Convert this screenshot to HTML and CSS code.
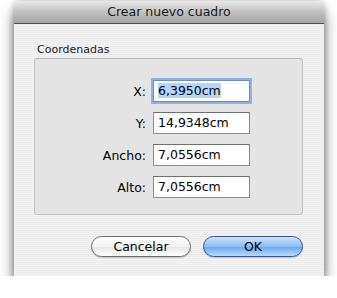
FILE: index.html
```html
<!DOCTYPE html>
<html lang="es">

<head>
    <meta charset="UTF-8">
    <title>Crear nuevo cuadro</title>
    <link rel="stylesheet" href="styles.css">
</head>

<body>
    <div class="window">
        <div class="titlebar">Crear nuevo cuadro</div>

        <div class="content">
            <div class="group-label">Coordenadas</div>
            <div class="group">
                <div class="form">
                    <label class="label">X:</label>
                    <div class="field focused"><span class="selected">6,3950cm</span></div>

                    <label class="label">Y:</label>
                    <div class="field">14,9348cm</div>

                    <label class="label">Ancho:</label>
                    <div class="field">7,0556cm</div>

                    <label class="label">Alto:</label>
                    <div class="field">7,0556cm</div>
                </div>
            </div>

            <div class="buttons">
                <button class="btn">Cancelar</button>
                <button class="btn btn-default">OK</button>
            </div>
        </div>
    </div>
</body>

</html>
```

FILE: styles.css
```css
* {
    box-sizing: border-box;
    margin: 0;
    padding: 0;
}

body {
    background-color: #ffffff;
    font-family: 'DejaVu Sans', 'Liberation Sans', sans-serif;
    color: #000;
    padding: 1px 0 0 14px;
}

.window {
    width: 310px;
    height: 275px;
    display: flex;
    flex-direction: column;
    border-radius: 6px 6px 0 0;
    overflow: hidden;
    box-shadow: 0 10px 14px rgba(0, 0, 0, 0.55), 0 0 6px rgba(0, 0, 0, 0.25);
}

.titlebar {
    height: 23px;
    background: linear-gradient(#e9e9e9, #bdbdbd 55%, #a6a6a6);
    border-bottom: 1px solid #4f4f4f;
    text-align: center;
    font-size: 12.5px;
    line-height: 22px;
    color: #1a1a1a;
}

.content {
    flex: 1;
    background-color: #ececec;
    background-image: repeating-linear-gradient(0deg, rgba(255, 255, 255, 0.35) 0 1px, transparent 1px 2px);
    padding: 19px 21px 0 20px;
}

.group-label {
    font-size: 11px;
    color: #222;
    padding-left: 3px;
    height: 15px;
}

.group {
    height: 157px;
    background-color: #e4e4e4;
    border: 1px solid #c3c3c3;
    border-top-color: #b3b3b3;
    border-radius: 3px;
    padding-top: 21px;
}

.form {
    display: grid;
    grid-template-columns: 111px 97px;
    grid-auto-rows: 22px;
    row-gap: 10px;
    column-gap: 7px;
    align-items: center;
}

.label {
    text-align: right;
    font-size: 12.5px;
}

.field {
    height: 22px;
    background-color: #fff;
    border: 1px solid #8e8e8e;
    border-top-color: #6f6f6f;
    font-size: 12.5px;
    line-height: 20px;
    padding-left: 4px;
}

.field.focused {
    border-color: #6f8fb8;
    box-shadow: 0 0 0 2px #8fb3e3;
}

.selected {
    background-color: #b5d5ff;
}

.buttons {
    display: flex;
    justify-content: flex-end;
    gap: 12px;
    margin-top: 21px;
}

.btn {
    width: 100px;
    height: 21px;
    border-radius: 11px;
    border: 1px solid #6d6d6d;
    background: linear-gradient(#ffffff, #f3f3f3 50%, #e6e6e6 51%, #ffffff);
    font-family: 'DejaVu Sans', 'Liberation Sans', sans-serif;
    font-size: 12.5px;
    color: #000;
    box-shadow: 0 1px 1px rgba(0, 0, 0, 0.2);
}

.btn-default {
    border-color: #3d4f8a;
    background: linear-gradient(#cfe4fb, #8dbcf2 50%, #6aa5ee 51%, #b6dcff);
}
```
